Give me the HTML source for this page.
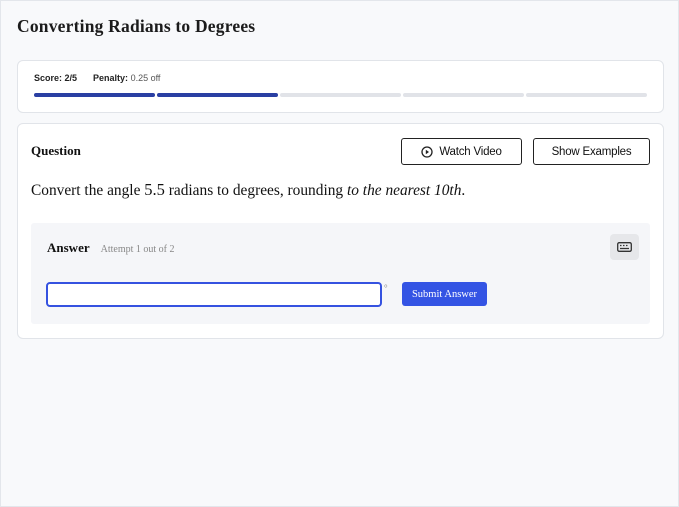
<!DOCTYPE html>
<html><head><style>
*{box-sizing:border-box;margin:0;padding:0}
body{width:679px;height:507px;background:#f8f9fb;box-shadow:inset 0 0 0 1px #e3e6eb;position:relative;overflow:hidden;font-family:"Liberation Serif",serif;color:#111}
.abs{position:absolute}
h1{position:absolute;left:17px;top:16px;font-size:17.5px;letter-spacing:0.2px;font-weight:bold;color:#1b1b1b}
.card{position:absolute;background:#fff;border:1px solid #e1e4e9;border-radius:6px}
.sans{font-family:"Liberation Sans",sans-serif}
.seg{position:absolute;top:93px;height:4px;border-radius:2px;background:#e1e3e8}
.btn{position:absolute;border:1px solid #222;border-radius:3px;font-family:"Liberation Sans",sans-serif;font-size:11.5px;letter-spacing:-0.2px;display:flex;align-items:center;justify-content:center;background:#fff}
</style></head><body>
<h1>Converting Radians to Degrees</h1>
<div class="card" style="left:17px;top:60px;width:647px;height:53px"></div>
<div class="abs sans" style="left:34px;top:73px;font-size:9px;color:#222"><b>Score: 2/5</b><span style="margin-left:16px"><b>Penalty:</b> <span style="color:#555">0.25 off</span></span></div>
<div class="seg" style="left:34px;width:121px;background:#2a3fa3"></div>
<div class="seg" style="left:157px;width:121px;background:#2a3fa3"></div>
<div class="seg" style="left:280px;width:121px"></div>
<div class="seg" style="left:403px;width:121px"></div>
<div class="seg" style="left:526px;width:121px"></div>
<div class="card" style="left:17px;top:123px;width:647px;height:216px"></div>
<div class="abs" style="left:31px;top:143px;font-size:13px;font-weight:bold">Question</div>
<div class="btn" style="left:401px;top:138px;width:121px;height:27px"><svg width="12" height="12" viewBox="0 0 12 12" style="margin-right:6px"><circle cx="6" cy="6" r="5" fill="none" stroke="#222" stroke-width="1.3"/><path d="M4.8 3.8L8 6 4.8 8.2z" fill="#222"/></svg>Watch Video</div>
<div class="btn" style="left:533px;top:138px;width:117px;height:27px">Show Examples</div>
<div class="abs" style="left:31px;top:180px;font-size:15.4px">Convert the angle <span style="font-size:16.5px">5.5</span> radians to degrees, rounding <i>to the nearest 10th</i>.</div>
<div class="abs" style="left:31px;top:223px;width:619px;height:101px;background:#f5f6f9;border-radius:3px"></div>
<div class="abs" style="left:47px;top:240px;font-size:13px;font-weight:bold">Answer <span style="font-weight:normal;font-size:10px;color:#888;margin-left:8px">Attempt 1 out of 2</span></div>
<div class="abs" style="left:610px;top:234px;width:29px;height:26px;background:#e6e7ea;border-radius:4px"><svg width="15" height="10" viewBox="0 0 15 10" style="position:absolute;left:7px;top:8px"><rect x="0.7" y="0.7" width="13.6" height="8.6" rx="1.5" fill="none" stroke="#333" stroke-width="1.3"/><path d="M3 3.5h1.5M6 3.5h1.5M9 3.5h1.5M3 6.5h9" stroke="#333" stroke-width="1.3"/></svg></div>
<div class="abs" style="left:46px;top:282px;width:336px;height:25px;background:#fff;border:2px solid #3552e0;border-radius:4px"></div>
<div class="abs" style="left:384px;top:283px;font-size:9px;color:#888">°</div>
<div class="abs" style="left:402px;top:282px;width:85px;height:24px;background:#3454e4;border-radius:3px;color:#fff;font-size:10.5px;display:flex;align-items:center;justify-content:center">Submit Answer</div>
</body></html>
